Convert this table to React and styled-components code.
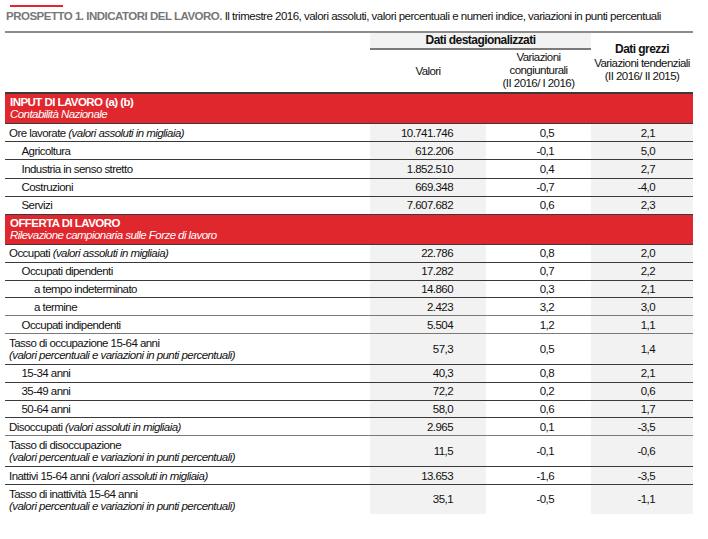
import React from "react";
import styled, { createGlobalStyle } from "styled-components";

const GlobalStyle = createGlobalStyle`
  body {
    margin: 0;
    background: #ffffff;
    font-family: "Liberation Sans Narrow", "Arial Narrow", "Liberation Sans", Arial, sans-serif;
    color: #111111;
  }
`;

const RED = "#e1272e";
const SHADE = "#f2f2f2";

const Page = styled.div`
  width: 688px;
  padding: 5px 0 0 5px;
`;

const Accent = styled.div`
  width: 53px;
  height: 2px;
  margin-left: 5px;
  background: ${RED};
`;

const Title = styled.div`
  font-size: 11.5px;
  letter-spacing: -0.5px;
  line-height: 14px;
  padding: 2px 0 8px 1px;
  border-bottom: 2px solid #8c8c8c;
  white-space: nowrap;
`;

const TitleLead = styled.span`
  color: #777777;
  font-weight: bold;
`;

const Table = styled.table`
  width: 688px;
  border-collapse: collapse;
  table-layout: fixed;
  font-size: 11.5px;
  letter-spacing: -0.55px;
  line-height: 12px;
`;

const HeadCell = styled.th`
  font-weight: normal;
  text-align: center;
  white-space: nowrap;
  vertical-align: ${(p) => p.$valign || "middle"};
  padding: 0 2px ${(p) => (p.$valign === "bottom" ? "2px" : "0")};
  line-height: 13px;
  background: ${(p) => (p.$shade ? SHADE : "transparent")};
  border-bottom: ${(p) => p.$under || "none"};
  height: ${(p) => p.$h || "auto"};
`;

const Strong = styled.div`
  font-weight: bold;
  font-size: 12px;
  margin-bottom: 1px;
`;

const HeadRow = styled.tr`
  border-bottom: 2px solid #3a3a3a;
`;

const SectionCell = styled.td`
  background: ${RED};
  color: #ffffff;
  padding: 2px 5px 3px;
  height: 22px;
  line-height: 12px;
  border-bottom: 1px solid #3a3a3a;
`;

const SectionTitle = styled.div`
  font-weight: bold;
`;

const Italic = styled.i`
  font-style: italic;
`;

const Row = styled.tr`
  border-bottom: ${(p) => (p.$last ? "none" : p.$soft ? "1px solid #7a7a7a" : "1px solid #3a3a3a")};
`;

const Label = styled.td`
  padding: 0 0 0 ${(p) => 4 + p.$indent * 12.5}px;
  height: ${(p) => (p.$last ? "26px" : p.$tall ? "27px" : `${p.$h}px`)};
  vertical-align: ${(p) => (p.$tall ? "top" : "middle")};
  padding-top: ${(p) => (p.$tall ? "3px" : "0")};
  white-space: nowrap;
`;

const Value = styled.td`
  text-align: right;
  padding-right: ${(p) => p.$pad}px;
  background: ${(p) => (p.$shade ? SHADE : "#ffffff")};
  vertical-align: middle;
`;

const sections = [
  {
    title: "INPUT DI LAVORO (a) (b)",
    sub: "Contabilità Nazionale",
    rowHeight: 17.2,
    rows: [
      { label: "Ore lavorate", note: "(valori assoluti in migliaia)", indent: 0, v: ["10.741.746", "0,5", "2,1"] },
      { label: "Agricoltura", indent: 1, v: ["612.206", "-0,1", "5,0"] },
      { label: "Industria in senso stretto", indent: 1, v: ["1.852.510", "0,4", "2,7"] },
      { label: "Costruzioni", indent: 1, v: ["669.348", "-0,7", "-4,0"] },
      { label: "Servizi", indent: 1, v: ["7.607.682", "0,6", "2,3"] },
    ],
  },
  {
    title: "OFFERTA DI LAVORO",
    sub: "Rilevazione campionaria sulle Forze di lavoro",
    rowHeight: 16.8,
    rows: [
      { label: "Occupati", note: "(valori assoluti in migliaia)", indent: 0, v: ["22.786", "0,8", "2,0"] },
      { label: "Occupati dipendenti", indent: 1, v: ["17.282", "0,7", "2,2"] },
      { label: "a tempo indeterminato", indent: 2, v: ["14.860", "0,3", "2,1"] },
      { label: "a termine", indent: 2, v: ["2.423", "3,2", "3,0"], soft: true },
      { label: "Occupati indipendenti", indent: 1, v: ["5.504", "1,2", "1,1"], soft: true },
      { label: "Tasso di occupazione 15-64 anni", note: "(valori percentuali e variazioni in punti percentuali)", tall: true, indent: 0, v: ["57,3", "0,5", "1,4"] },
      { label: "15-34 anni", indent: 1, v: ["40,3", "0,8", "2,1"] },
      { label: "35-49 anni", indent: 1, v: ["72,2", "0,2", "0,6"] },
      { label: "50-64 anni", indent: 1, v: ["58,0", "0,6", "1,7"] },
      { label: "Disoccupati", note: "(valori assoluti in migliaia)", indent: 0, v: ["2.965", "0,1", "-3,5"], soft: true },
      { label: "Tasso di disoccupazione", note: "(valori percentuali e variazioni in punti percentuali)", tall: true, indent: 0, v: ["11,5", "-0,1", "-0,6"] },
      { label: "Inattivi 15-64 anni", note: "(valori assoluti in migliaia)", indent: 0, v: ["13.653", "-1,6", "-3,5"] },
      { label: "Tasso di inattività 15-64 anni", note: "(valori percentuali e variazioni in punti percentuali)", tall: true, indent: 0, v: ["35,1", "-0,5", "-1,1"] },
    ],
  },
];

const DataRow = ({ row, last, height }) => (
  <Row $soft={row.soft} $last={last}>
    <Label $indent={row.indent} $tall={row.tall} $last={last} $h={height}>
      {row.label}
      {row.note && (row.tall ? <br /> : " ")}
      {row.note && <Italic>{row.note}</Italic>}
    </Label>
    <Value $shade $pad={33}>{row.v[0]}</Value>
    <Value $pad={37}>{row.v[1]}</Value>
    <Value $shade $pad={38}>{row.v[2]}</Value>
  </Row>
);

export default function App() {
  return (
    <Page>
      <GlobalStyle />
      <Accent />
      <Title>
        <TitleLead>PROSPETTO 1. INDICATORI DEL LAVORO.</TitleLead> Il trimestre 2016, valori assoluti, valori
        percentuali e numeri indice, variazioni in punti percentuali
      </Title>
      <Table>
        <colgroup>
          <col style={{ width: 365 }} />
          <col style={{ width: 116 }} />
          <col style={{ width: 105 }} />
          <col style={{ width: 102 }} />
        </colgroup>
        <thead>
          <tr>
            <HeadCell rowSpan={2} />
            <HeadCell colSpan={2} $shade $h="15px" $under="2px solid #7a7a7a">
              <Strong>Dati destagionalizzati</Strong>
            </HeadCell>
            <HeadCell rowSpan={2}>
              <Strong>Dati grezzi</Strong>
              Variazioni tendenziali
              <br />
              (II 2016/ II 2015)
            </HeadCell>
          </tr>
          <HeadRow>
            <HeadCell $h="42px">Valori</HeadCell>
            <HeadCell $valign="bottom">
              Variazioni
              <br />
              congiunturali
              <br />
              (II 2016/ I 2016)
            </HeadCell>
          </HeadRow>
        </thead>
        <tbody>
          {sections.map((s, si) => (
            <React.Fragment key={s.title}>
              <tr>
                <SectionCell colSpan={4}>
                  <SectionTitle>{s.title}</SectionTitle>
                  <Italic>{s.sub}</Italic>
                </SectionCell>
              </tr>
              {s.rows.map((r, ri) => (
                <DataRow
                  key={r.label}
                  row={r}
                  height={s.rowHeight}
                  last={si === sections.length - 1 && ri === s.rows.length - 1}
                />
              ))}
            </React.Fragment>
          ))}
        </tbody>
      </Table>
    </Page>
  );
}
